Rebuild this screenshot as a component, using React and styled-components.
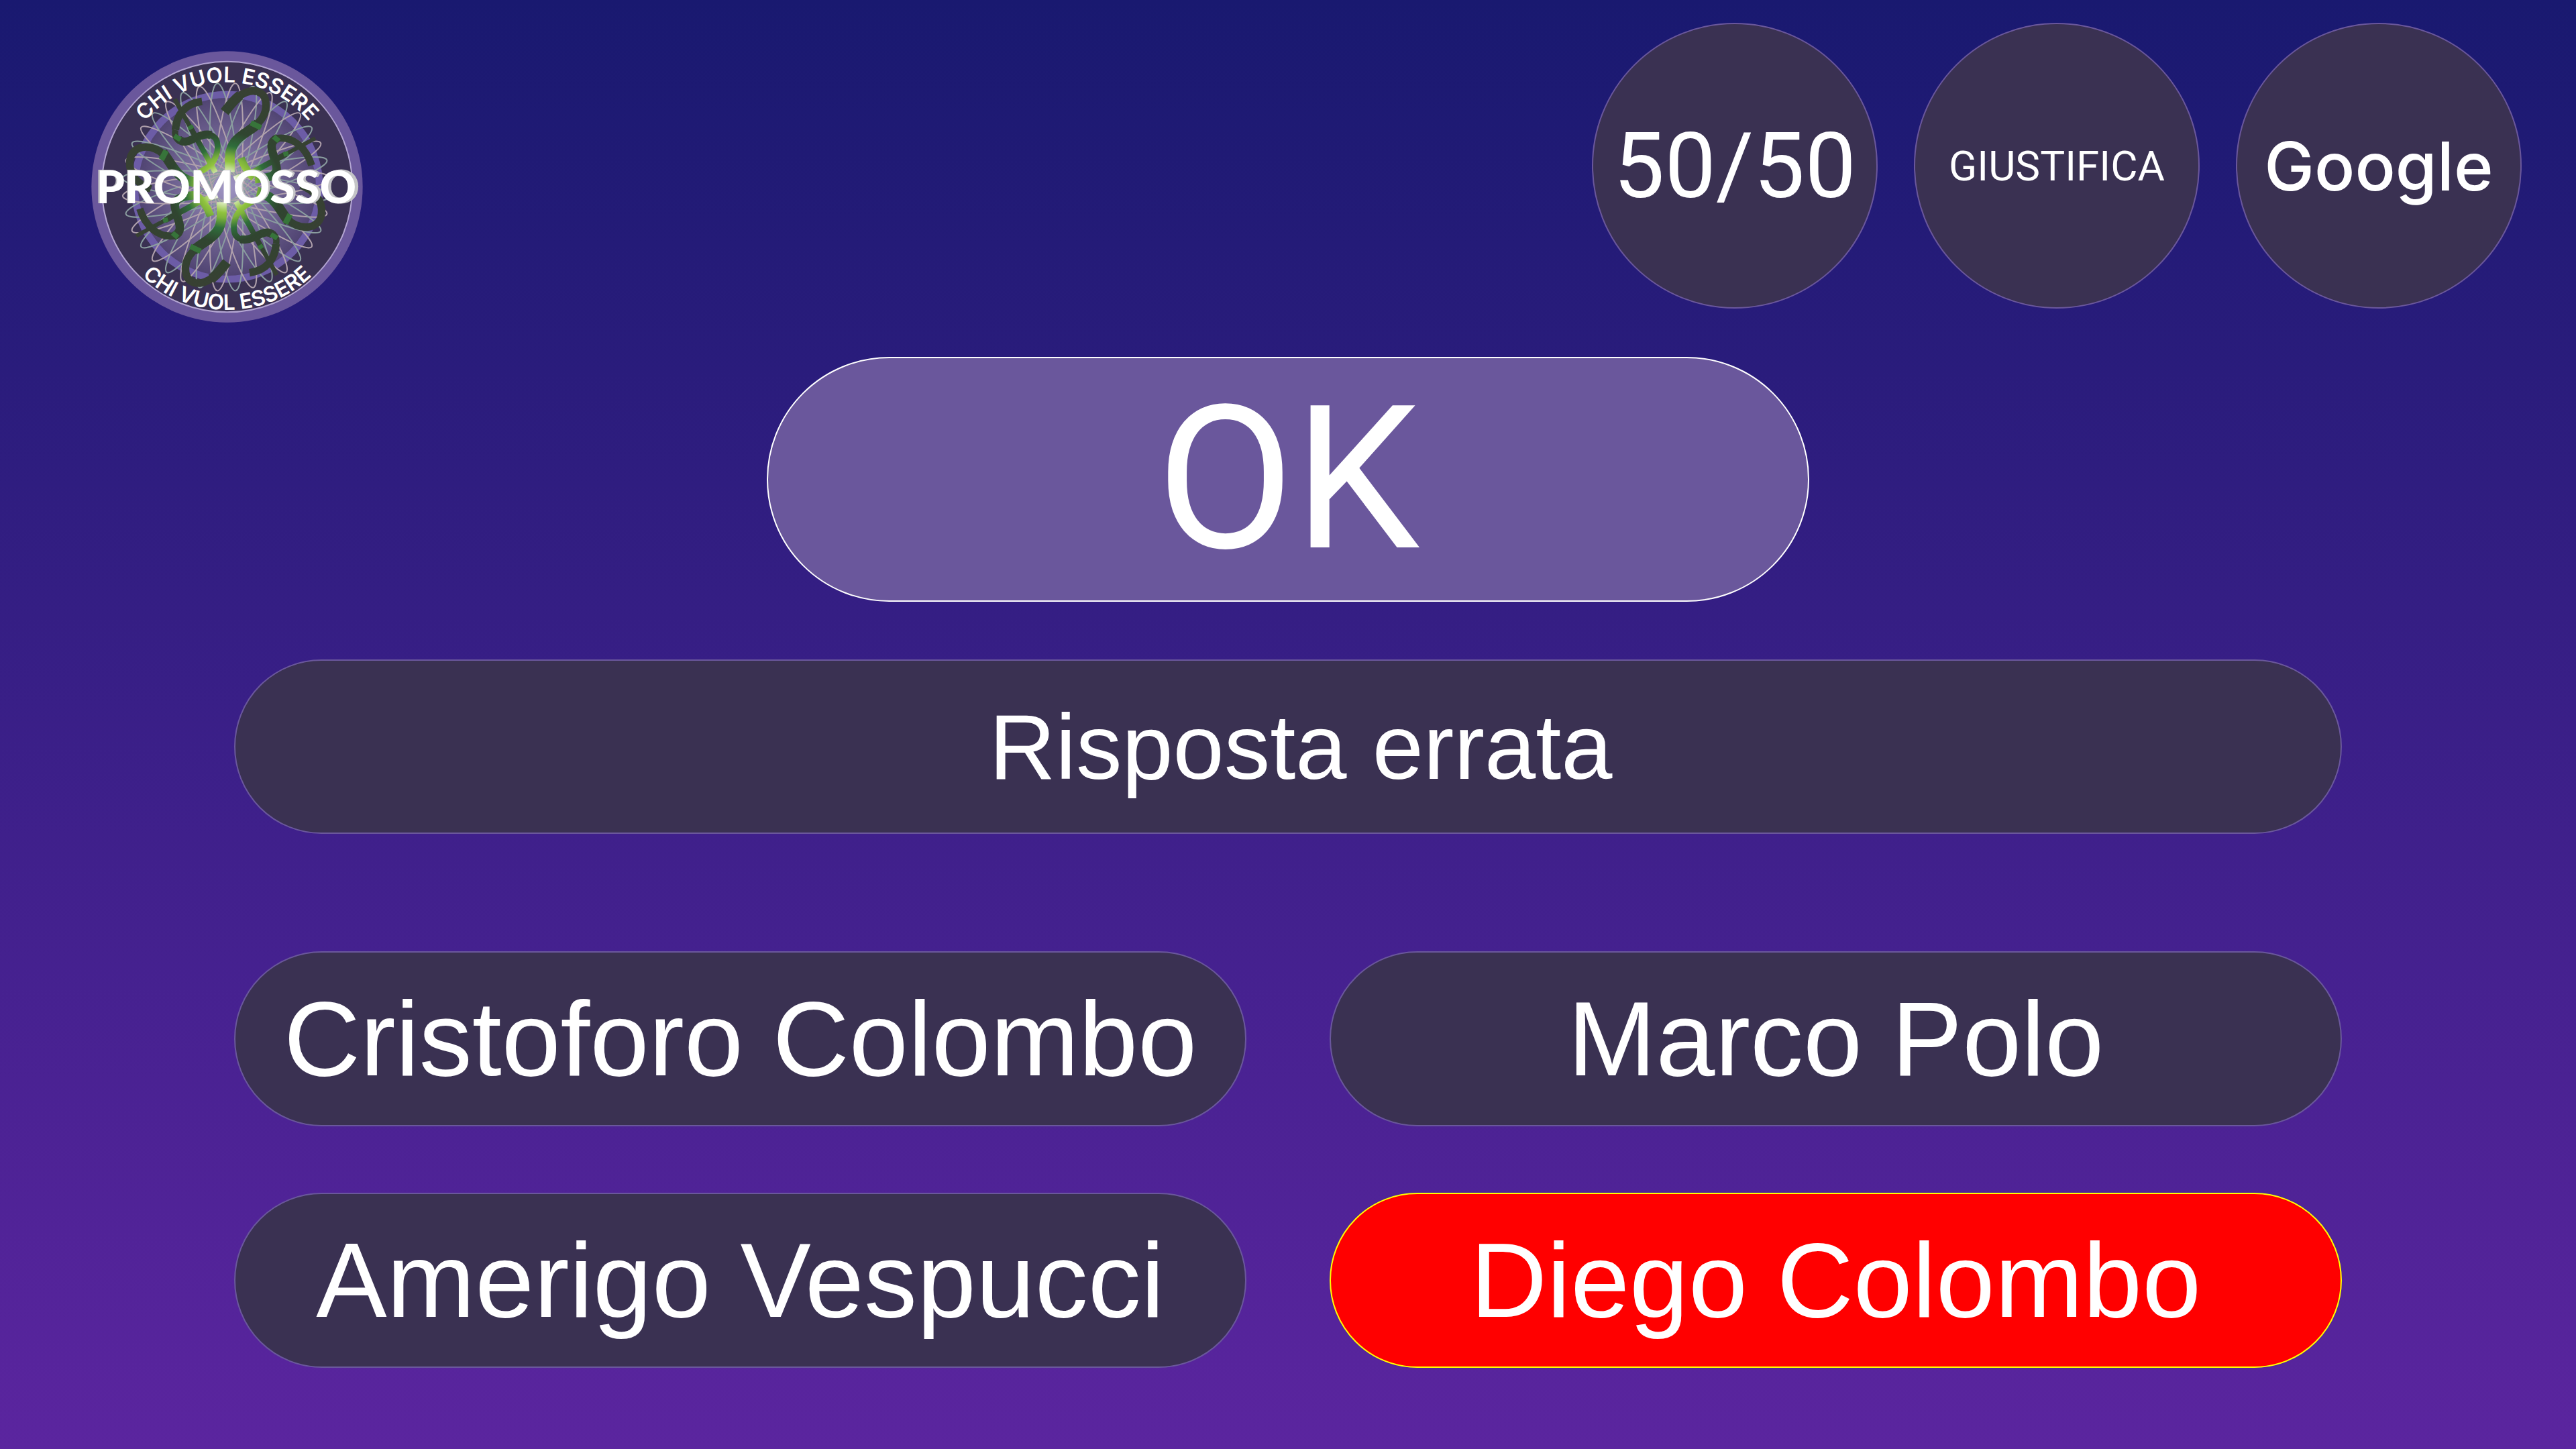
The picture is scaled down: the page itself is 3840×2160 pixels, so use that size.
import React from "react";
import styled, { createGlobalStyle, css } from "styled-components";

const palette = {
  panel: "#3a3152",
  line: "#6a579c",
  white: "#ffffff",
};

const GlobalStyle = createGlobalStyle`
  *, *::before, *::after { box-sizing: border-box; }
  body {
    margin: 0;
    color: ${palette.white};
    font-family: "Liberation Sans", Arial, sans-serif;
  }
`;

const Page = styled.div`
  display: flex;
  flex-direction: column;
  gap: 51px;
  min-height: 100vh;
  background: linear-gradient(#191970, #5b259f);
`;

const Header = styled.header`
  display: flex;
  justify-content: space-between;
  align-items: flex-start;
  padding: 34px 81px 0 136px;
`;

const Brand = styled.a`
  display: block;
  padding-top: 42px;
`;

const LogoSvg = styled.svg`
  display: block;
  width: 405px;
  height: 405px;
  overflow: visible;
`;

const LogoWord = styled.text`
  font-family: Lato, sans-serif;
  font-weight: 900;
  text-anchor: middle;
`;

const LogoMotto = styled.text`
  font-family: Inter, sans-serif;
  font-weight: 600;
  font-size: 95px;
  text-anchor: middle;
  fill: ${palette.white};
`;

const Lifelines = styled.nav`
  display: flex;
  gap: 54px;
`;

const surface = css`
  display: flex;
  justify-content: center;
  align-items: center;
  margin: 0;
  padding: 0;
  border: 2px solid ${palette.line};
  background: ${palette.panel};
  color: ${palette.white};
  white-space: pre;
`;

const Lifeline = styled.button`
  ${surface}
  width: 426px;
  height: 426px;
  border-radius: 50%;
  font-family: ${(p) => p.$family || "Roboto"}, sans-serif;
  font-weight: ${(p) => p.$weight || 450};
  font-size: ${(p) => p.$size}px;
  cursor: pointer;
`;

const Main = styled.main`
  display: flex;
  flex-direction: column;
  align-items: center;
  padding: 0 349px 120px;
`;

const Confirm = styled.button`
  ${surface}
  width: 1554px;
  max-width: 100%;
  height: 365px;
  border-color: ${palette.white};
  border-radius: 183px;
  background: ${palette.line};
  font-family: Roboto, sans-serif;
  font-weight: 450;
  font-size: 298px;
  cursor: pointer;
`;

const Question = styled.h1`
  ${surface}
  width: 100%;
  height: 260px;
  margin: 86px 0 175px;
  border-radius: 130px;
  font-weight: 400;
  font-size: 137px;
`;

const Answers = styled.section`
  display: grid;
  grid-template-columns: 1fr 1fr;
  gap: 99px 124px;
  width: 100%;
`;

const Answer = styled.button`
  ${surface}
  height: 261px;
  border-color: ${(p) => (p.$wrong ? "#ffff00" : palette.line)};
  border-radius: 131px;
  background: ${(p) => (p.$wrong ? "#ff0000" : palette.panel)};
  font-family: inherit;
  font-size: 158px;
  cursor: pointer;
`;

const spokes = Array.from({ length: 18 }, (_, i) => i);

function Ribbons() {
  return (
    <g fill="none" stroke="url(#ribbon)">
      <path strokeWidth="20" d="M422 262 L492 388" />
      <path strokeWidth="24" d="M492 388 L604 590" />
      <path strokeWidth="18" d="M250 873 L380 803" />
      <path strokeWidth="26" d="M380 803 L530 722 L612 690" />
      <path strokeWidth="34" d="M582 785 C566 740 548 715 525 698" />
      <path strokeWidth="34" d="M544 272 C470 282 430 330 425 400" />
      <path strokeWidth="28" d="M425 400 C420 425 428 440 445 450" />
      <path strokeWidth="36" d="M438 440 C480 480 520 408 585 422" />
      <path strokeWidth="26" d="M575 420 C630 432 615 500 600 530 C585 560 560 575 530 590" />
      <path strokeWidth="34" d="M315 664 C250 640 215 590 222 535 C230 470 310 455 375 510" />
      <path strokeWidth="44" d="M368 500 C410 550 425 615 510 634" />
      <path strokeWidth="32" d="M266 752 C290 830 350 885 425 872" />
      <path strokeWidth="38" d="M418 874 C475 850 425 790 422 735 C425 700 460 698 520 690" />
      <path strokeWidth="44" d="M645 320 C668 290 690 262 715 245" />
      <path strokeWidth="34" d="M708 250 C770 208 830 220 830 290 C830 330 810 355 780 384" />
      <path strokeWidth="44" d="M795 370 C745 420 668 430 668 530 L668 588" />
      <g stroke="#37743a">
        <path strokeWidth="24" d="M762 368 L808 390" />
        <path strokeWidth="18" d="M484 394 L504 382" />
        <path strokeWidth="22" d="M420 426 L448 444" />
        <path strokeWidth="26" d="M362 533 L384 492" />
        <path strokeWidth="20" d="M370 806 L392 800" />
        <path strokeWidth="22" d="M412 860 L436 880" />
      </g>
    </g>
  );
}

function Logo() {
  return (
    <LogoSvg viewBox="49 47 1214 1214" role="img" aria-label="Chi vuol essere promosso">
      <defs>
        <radialGradient id="disc">
          <stop offset="0" stopColor="#a096c4" />
          <stop offset="0.5" stopColor="#746796" />
          <stop offset="1" stopColor="#4e4270" />
        </radialGradient>
        <radialGradient id="ribbon" gradientUnits="userSpaceOnUse" cx="650" cy="655" r="460">
          <stop offset="0.12" stopColor="#f4f9e8" />
          <stop offset="0.25" stopColor="#90c33e" />
          <stop offset="0.3" stopColor="#7db23c" />
          <stop offset="0.4" stopColor="#2f6e3b" />
          <stop offset="0.54" stopColor="#304530" />
          <stop offset="1" stopColor="#384033" />
        </radialGradient>
        <path id="arcTop" d="M188 655 A468 468 0 0 1 1124 655" />
        <path id="arcBottom" d="M107 655 A549 549 0 0 0 1205 655" />
      </defs>
      <circle cx="656" cy="654" r="606" fill="#6a579c" />
      <circle cx="656" cy="654" r="560" fill="#3a3152" stroke="#b3a5d2" strokeWidth="6" />
      <circle cx="656" cy="654" r="413" fill="url(#disc)" stroke="#6c5ca6" strokeWidth="32" />
      <g fill="none" strokeWidth="6">
        {spokes.map((i) => (
          <ellipse
            key={i}
            cx="653"
            cy="655"
            rx="62"
            ry="465"
            stroke={i % 2 ? "#b0a1ac" : "#8a9d9f"}
            transform={`rotate(${i * 10 - 5} 653 655)`}
          />
        ))}
      </g>
      <Ribbons />
      <g transform="rotate(180 650 655)">
        <Ribbons />
      </g>
      <LogoMotto>
        <textPath href="#arcTop" startOffset="50%">CHI VUOL ESSERE</textPath>
      </LogoMotto>
      <LogoMotto>
        <textPath href="#arcBottom" startOffset="50%">CHI VUOL ESSERE</textPath>
      </LogoMotto>
      <LogoWord x="657" y="728" fontSize="206" fill="#c4c4c6" aria-hidden="true">PROMOSSO</LogoWord>
      <LogoWord x="653" y="727" fontSize="202" fill="#ffffff">PROMOSSO</LogoWord>
    </LogoSvg>
  );
}

const answers = [
  { text: "Cristoforo Colombo" },
  { text: "Marco Polo" },
  { text: "Amerigo Vespucci" },
  { text: "Diego Colombo", wrong: true },
];

export default function App() {
  return (
    <Page>
      <GlobalStyle />
      <Header>
        <Brand href="#">
          <Logo />
        </Brand>
        <Lifelines>
          <Lifeline type="button" $size={136}>50/50</Lifeline>
          <Lifeline type="button" $size={62}>GIUSTIFICA</Lifeline>
          <Lifeline type="button" $size={100} $family="Inter" $weight={500}>Google</Lifeline>
        </Lifelines>
      </Header>
      <Main>
        <Confirm type="button">OK</Confirm>
        <Question>{"\u00a0Risposta errata"}</Question>
        <Answers>
          {answers.map((a) => (
            <Answer key={a.text} type="button" $wrong={a.wrong}>
              {a.text}
            </Answer>
          ))}
        </Answers>
      </Main>
    </Page>
  );
}
